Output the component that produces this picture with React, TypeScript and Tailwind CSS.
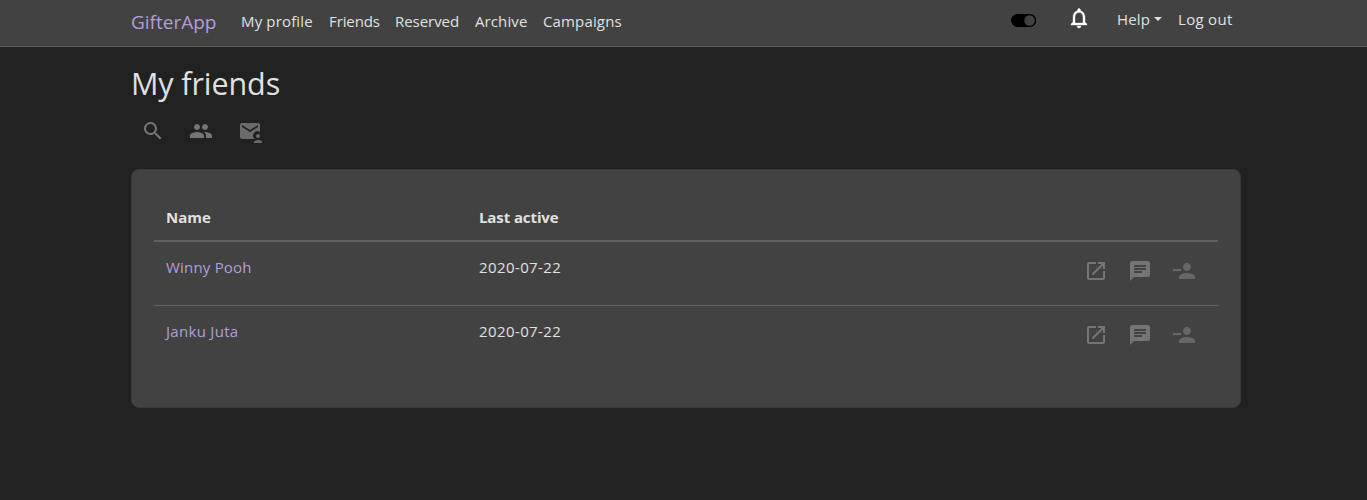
import type { ReactNode } from 'react';

const SEARCH =
  'M15.5 14h-.79l-.28-.27C15.41 12.59 16 11.11 16 9.5 16 5.91 13.09 3 9.5 3S3 5.91 3 9.5 5.91 16 9.5 16c1.61 0 3.09-.59 4.23-1.57l.27.28v.79l5 4.99L20.49 19l-4.99-5zm-6 0C7.01 14 5 11.99 5 9.5S7.01 5 9.5 5 14 7.01 14 9.5 11.99 14 9.5 14z';
const PEOPLE =
  'M16 11c1.66 0 2.99-1.34 2.99-3S17.66 5 16 5c-1.66 0-3 1.34-3 3s1.34 3 3 3zm-8 0c1.66 0 2.99-1.34 2.99-3S9.66 5 8 5C6.34 5 5 6.34 5 8s1.34 3 3 3zm0 2c-2.33 0-7 1.17-7 3.5V19h14v-2.5c0-2.33-4.67-3.5-7-3.5zm8 0c-.29 0-.62.02-.97.05 1.16.84 1.97 1.97 1.97 3.45V19h6v-2.5c0-2.33-4.67-3.5-7-3.5z';
const BELL =
  'M12 22c1.1 0 2-.9 2-2h-4c0 1.1.9 2 2 2zm6-6v-5c0-3.07-1.63-5.64-4.5-6.32V4c0-.83-.67-1.5-1.5-1.5s-1.5.67-1.5 1.5v.68C7.64 5.36 6 7.92 6 11v5l-2 2v1h16v-1l-2-2zm-2 1H8v-6c0-2.48 1.51-4.5 4-4.5s4 2.02 4 4.5v6z';
const LAUNCH =
  'M19 19H5V5h7V3H5c-1.11 0-2 .9-2 2v14c0 1.1.89 2 2 2h14c1.1 0 2-.9 2-2v-7h-2v7zM14 3v2h3.59l-9.83 9.83 1.41 1.41L19 6.41V10h2V3h-7z';
const CHAT =
  'M20 2H4c-1.1 0-1.99.9-1.99 2L2 22l4-4h14c1.1 0 2-.9 2-2V4c0-1.1-.9-2-2-2zM6 9h12v2H6V9zm8 5H6v-2h8v2zm4-6H6V6h12v2z';
const PERSON_REMOVE =
  'M15 12c2.21 0 4-1.79 4-4s-1.79-4-4-4-4 1.79-4 4 1.79 4 4 4zm0 2c-2.67 0-8 1.34-8 4v2h16v-2c0-2.66-5.33-4-8-4zM1 10h8v2H1z';
const MAIL =
  'M20 4H4c-1.1 0-2 .9-2 2v12c0 1.1.9 2 2 2h12.7a4.4 4.4 0 0 1 5.3-7V6c0-1.1-.9-2-2-2zm0 4-8 5-8-5V6l8 5 8-5v2z';

function Icon({ d, className, children }: { d: string; className?: string; children?: ReactNode }) {
  return (
    <svg viewBox="0 0 24 24" width="24" height="24" fill="currentColor" className={`shrink-0 overflow-visible ${className ?? ''}`}>
      <path d={d} />
      {children}
    </svg>
  );
}

const friends = [
  { name: 'Winny Pooh', active: '2020-07-22', spacing: 'tracking-[0.2px]' },
  { name: 'Janku Juta', active: '2020-07-22', spacing: 'tracking-[0.3px]' },
];

export default function App() {
  return (
    <div className="min-h-[500px] bg-[#212121] font-['Open_Sans','Noto_Sans',sans-serif] text-[15px] leading-6 text-[#e0e0e0]">
      <header className="h-[47px] border-b border-[#616161] bg-[#424242]">
        <div className="ml-[131px] flex h-[46px] w-[1110px] items-start whitespace-nowrap">
          <a className="mr-[25px] w-[85px] pt-[7px] text-[19px] leading-[30px] text-[#b39ddb]">GifterApp</a>
          <nav className="flex gap-4 pt-[9px]">
            <a className="w-[72px] tracking-[0.15px]">My profile</a>
            <a className="w-[50px] tracking-[-0.1px]">Friends</a>
            <a className="w-[64px] tracking-[-0.05px]">Reserved</a>
            <a className="w-[52px] tracking-[0.1px]">Archive</a>
            <a className="w-[80px] tracking-[0.15px]">Campaigns</a>
          </nav>
          <div className="ml-auto flex items-start pr-[7px]">
            <svg width="26" height="14" viewBox="0 0 26 14" className="mt-[14px] mr-[30px]">
              <rect x="0" y="0" width="25.4" height="13" rx="6.5" fill="#000" />
              <circle cx="18.5" cy="6.5" r="5.2" fill="#424242" />
            </svg>
            <Icon d={BELL} className="mt-[6px] mr-[26px] stroke-white stroke-[0.35] text-white" />
            <a className="flex w-[45px] items-start pt-[7px]">
              <span className="w-[37px] tracking-[0.15px]">Help</span>
              <svg width="8" height="4" viewBox="0 0 8 4" className="mt-[10px] shrink-0" fill="currentColor">
                <path d="M0 0h8L4 4z" />
              </svg>
            </a>
            <a className="ml-4 w-[56px] pt-[7px] tracking-[0.3px]">Log out</a>
          </div>
        </div>
      </header>

      <main className="ml-[131px] w-[1110px] pt-[17px]">
        <h1 className="h-[38px] text-[30.5px] leading-[38px] tracking-[-0.1px]">My friends</h1>
        <div className="mt-[17px] flex h-6 gap-[25px] pl-[10px] text-[#757575]">
          <Icon d={SEARCH} className="-mr-[1px]" />
          <Icon d={PEOPLE} />
          <Icon d={MAIL} className="text-[#6b6b6b]">
            <circle cx="20" cy="17" r="2" />
            <path d="M16 24v-1c0-1.2 2.4-1.9 4-1.9s4 .7 4 1.9v1z" />
          </Icon>
        </div>

        <section className="mt-[26px] h-[239px] rounded-lg border border-[#3a3a3a] bg-[#424242] px-[22px] pt-[24px]">
          <div className="grid h-[48px] grid-cols-[313px_1fr] border-b-2 border-[#616161] pt-[11px] pl-[12px] font-bold">
            <span>Name</span>
            <span className="tracking-[-0.1px]">Last active</span>
          </div>
          {friends.map((f, i) => (
            <div
              key={f.name}
              className={`grid h-[64px] grid-cols-[313px_1fr_110px] pt-[13px] pr-[24px] pl-[12px] ${i === 0 ? 'border-b border-[#616161]' : ''}`}
            >
              <a className={`text-[#b39ddb] ${f.spacing}`}>{f.name}</a>
              <span className="tracking-[0.4px]">{f.active}</span>
              <div className="flex gap-5 pt-[4px] text-[#757575]">
                <Icon d={LAUNCH} />
                <Icon d={CHAT} />
                <Icon d={PERSON_REMOVE} className="text-[#676767]" />
              </div>
            </div>
          ))}
        </section>
      </main>
    </div>
  );
}
